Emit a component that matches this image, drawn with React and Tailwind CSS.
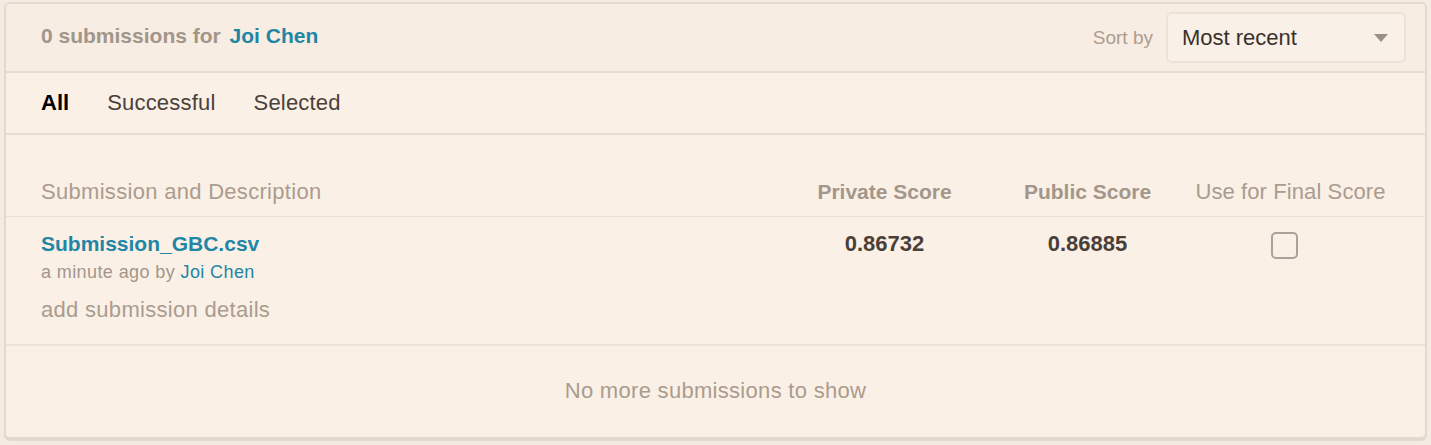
const font = { fontFamily: '"Liberation Sans", Arial, sans-serif' }

function SortSelect() {
  return (
    <div className="flex items-center gap-[13px]">
      <span className="text-[19px] leading-[24px] text-[#ab9d90]">Sort by</span>
      <div className="flex items-center justify-between w-[240px] h-[51px] pl-[14px] pr-[16px] rounded-md border-2 border-[#ede2d7] bg-[#f9f0e7]">
        <span className="text-[22px] leading-[26px] text-[#3a312b]">Most recent</span>
        <svg width="14" height="8" viewBox="0 0 14 8">
          <path d="M0 0h14L7 8z" fill="#9b9088" />
        </svg>
      </div>
    </div>
  )
}

function Tabs() {
  const tabs = ['All', 'Successful', 'Selected']
  return (
    <div className="flex items-center gap-[38px] h-[62px] pl-[35px] border-b-2 border-[#e6dcd1]">
      {tabs.map((tab, i) => (
        <span
          key={tab}
          className={`text-[22px] leading-[26px] tracking-[0.2px] ${i === 0 ? 'text-black font-semibold text-[21px] tracking-normal' : 'text-[#4a403a]'}`}
        >
          {tab}
        </span>
      ))}
    </div>
  )
}

export default function App() {
  return (
    <div className="w-[1431px] h-[445px] bg-[#f4ebe2] pt-[2px] pl-[4px]" style={font}>
      <div className="w-[1423px] h-[437px] rounded-[6px] border-2 border-[#e3d9ce] bg-[#faf0e6] overflow-hidden shadow-[0_2px_0_#e2d8cd]">
        <div className="flex items-center justify-between h-[69px] pl-[35px] pr-[19px] bg-[#f7ede3] border-b-2 border-[#e6dcd1]">
          <p className="pb-[3px] text-[21px] leading-[26px] font-semibold text-[#a29589]">
            0 submissions for <span className="text-[#1f86a6] ml-[3px]">Joi Chen</span>
          </p>
          <SortSelect />
        </div>

        <Tabs />

        <div className="grid grid-cols-[1fr_203px_203px_203px] pl-[35px] pr-[33px] text-[22px] leading-[26px]">
          <div className="h-[81px] flex items-end pb-[11px] tracking-[0.3px] text-[#ab9c8e]">Submission and Description</div>
          <div className="h-[81px] flex items-end justify-center pb-[11px] text-[21px] font-bold text-[#a3968b]">Private Score</div>
          <div className="h-[81px] flex items-end justify-center pb-[11px] text-[21px] font-bold text-[#a3968b]">Public Score</div>
          <div className="h-[81px] flex items-end justify-center pb-[11px] tracking-[0.1px] text-[#ab9c8e]">Use for Final Score</div>
        </div>

        <div className="border-t border-[#ecdfd4] border-b-2 border-b-[#ede2d8]">
          <div className="grid grid-cols-[1fr_203px_203px_203px] pl-[35px] pr-[33px] pt-[15px] pb-[21px]">
            <div>
              <p className="text-[21px] leading-[24px] font-bold text-[#1f86a6]">Submission_GBC.csv</p>
              <p className="mt-[5px] text-[18px] leading-[22px] tracking-[0.4px] text-[#a3968a]">
                a minute ago by <span className="text-[#1f86a6]">Joi Chen</span>
              </p>
              <p className="mt-[14px] text-[22px] leading-[26px] tracking-[0.3px] text-[#aa9c8f]">add submission details</p>
            </div>
            <div className="text-center text-[22px] leading-[24px] font-semibold text-[#4a3f38]">0.86732</div>
            <div className="text-center text-[22px] leading-[24px] font-semibold text-[#4a3f38]">0.86885</div>
            <div className="flex justify-center">
              <div className="w-[27px] h-[27px] mr-[12px] rounded-[5px] border-2 border-[#aaa19a]" />
            </div>
          </div>
        </div>

        <div className="h-[89px] flex items-center justify-center text-[22px] leading-[26px] tracking-[0.3px] text-[#aa9c8e]">
          No more submissions to show
        </div>
      </div>
    </div>
  )
}
